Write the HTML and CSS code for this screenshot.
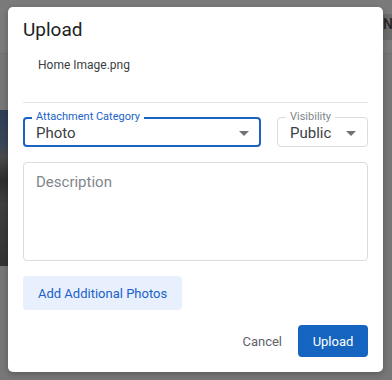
FILE: index.html
```html
<!DOCTYPE html>
<html>
<head>
<meta charset="utf-8">
<link rel="stylesheet" href="styles.css">
</head>
<body>
<div class="backdrop">
  <div class="bg-topbar"><span class="bg-letter">N</span></div>
  <div class="bg-photo"></div>
</div>
<div class="dialog">
  <h1 class="title">Upload</h1>
  <div class="filename">Home Image.png</div>
  <hr class="divider">
  <div class="fields">
    <div class="field field-focused field-category">
      <span class="field-label">Attachment Category</span>
      <span class="field-value">Photo</span>
      <span class="caret"></span>
    </div>
    <div class="field field-visibility">
      <span class="field-label">Visibility</span>
      <span class="field-value">Public</span>
      <span class="caret"></span>
    </div>
  </div>
  <div class="textarea"><span class="placeholder">Description</span></div>
  <div class="add-row"><button class="btn-tonal">Add Additional Photos</button></div>
  <div class="actions">
    <button class="btn-text">Cancel</button>
    <button class="btn-primary">Upload</button>
  </div>
</div>
</body>
</html>
```

FILE: styles.css
```css
* { box-sizing: border-box; }
html, body { margin: 0; padding: 0; }
body {
  width: 392px;
  height: 380px;
  overflow: hidden;
  background: #777777;
  font-family: Roboto, "Noto Sans", sans-serif;
  position: relative;
}
.backdrop {
  position: absolute;
  inset: 0;
}
.bg-topbar {
  height: 54px;
  background: #7b7b7b;
  border-bottom: 1px solid #707070;
  display: flex;
  justify-content: flex-end;
  align-items: flex-start;
}
.bg-letter {
  margin-top: 14px;
  margin-right: -4px;
  font-size: 14px;
  font-weight: 500;
  color: #262626;
  background: #6c6c6c;
  width: 14px;
  height: 26px;
  padding-top: 2px;
  padding-left: 1px;
}
.bg-photo {
  position: absolute;
  left: 0;
  top: 110px;
  width: 20px;
  height: 156px;
  background: linear-gradient(180deg, #2f3e55 0%, #3a4658 22%, #4a4a4a 30%, #2e2e2e 45%, #3f3f3f 60%, #333 100%);
}
.dialog {
  position: absolute;
  left: 8px;
  top: 7px;
  width: 375px;
  height: 365px;
  background: #ffffff;
  border-radius: 5px;
  box-shadow: 0 2px 6px rgba(0,0,0,0.25);
  padding: 0 15px;
  display: flex;
  flex-direction: column;
}
.title {
  margin: 11px 0 0 0;
  font-size: 19px;
  font-weight: 400;
  color: #202124;
  line-height: 24px;
  height: 24px;
}
.filename {
  margin: 15px 0 0 15px;
  font-size: 12px;
  color: #3c4043;
  line-height: 16px;
}
.divider {
  margin: 29px 0 0 0;
  border: 0;
  border-top: 1px solid #e3e3e3;
  height: 0;
}
.fields {
  margin-top: 14px;
  display: flex;
  gap: 16px;
}
.field {
  position: relative;
  height: 30px;
  border: 1px solid #dadce0;
  border-radius: 4px;
  padding: 0 12px;
  display: flex;
  align-items: center;
}
.field-category { width: 238px; }
.field-visibility { width: 91px; }
.field-focused {
  border: 2px solid #1a62c7;
  padding: 0 11px;
}
.field-label {
  position: absolute;
  top: -8px;
  left: 8px;
  padding: 0 4px;
  background: #fff;
  font-size: 11px;
  line-height: 13px;
  color: #80868b;
}
.field-focused .field-label {
  top: -9px;
  left: 7px;
  color: #1a62c7;
}
.field-value {
  font-size: 15px;
  color: #3c4043;
  margin-top: 1px;
}
.caret {
  position: absolute;
  right: 11px;
  top: 13px;
  width: 0;
  height: 0;
  border-left: 5px solid transparent;
  border-right: 5px solid transparent;
  border-top: 5px solid #6f7378;
}
.field-focused .caret { right: 10px; top: 12px; }
.textarea {
  margin-top: 15px;
  height: 99px;
  border: 1px solid #dadce0;
  border-radius: 4px;
  padding: 9px 12px;
}
.placeholder {
  font-size: 15px;
  color: #80868b;
}
.add-row {
  margin-top: 15px;
  display: flex;
}
.btn-tonal {
  height: 34px;
  padding: 0 15px;
  border: 0;
  border-radius: 4px;
  background: #e8f0fe;
  color: #1a62c7;
  font-family: Roboto, "Noto Sans", sans-serif;
  font-size: 13px;
  font-weight: 400;
}
.actions {
  margin-top: 15px;
  display: flex;
  justify-content: flex-end;
  align-items: center;
  gap: 16px;
}
.btn-text {
  border: 0;
  background: none;
  padding: 0;
  font-family: Roboto, "Noto Sans", sans-serif;
  font-size: 13px;
  color: #5f6368;
}
.btn-primary {
  width: 70px;
  height: 32px;
  border: 0;
  border-radius: 4px;
  background: #1565c0;
  color: #fff;
  font-family: Roboto, "Noto Sans", sans-serif;
  font-size: 13px;
  font-weight: 400;
}
```
